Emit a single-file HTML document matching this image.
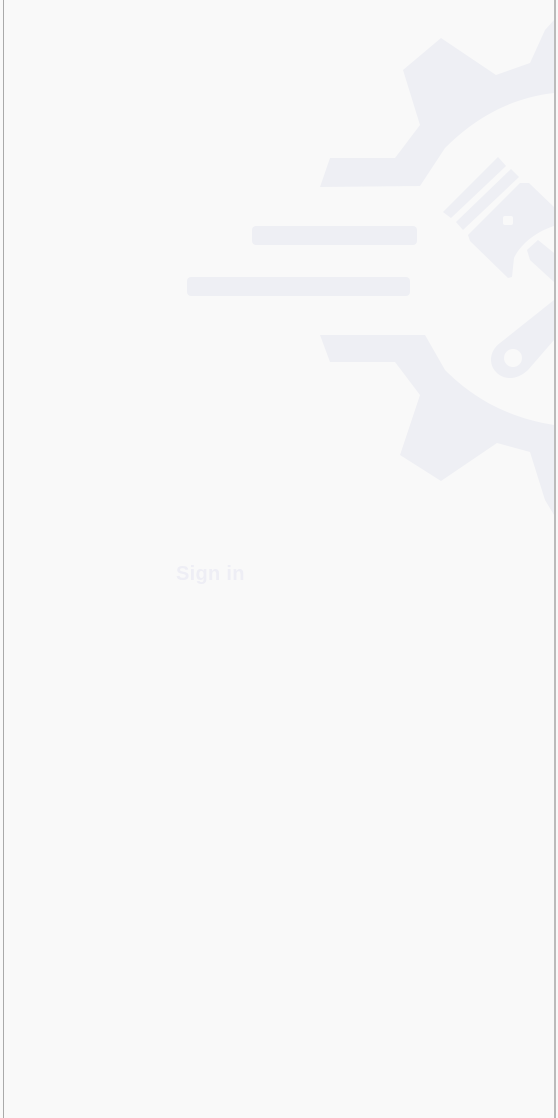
<!DOCTYPE html>
<html><head><style>
html,body{margin:0;padding:0;}
body{width:558px;height:1118px;background:#f9f9f9;position:relative;overflow:hidden;font-family:"Liberation Sans",sans-serif;}
.bl{position:absolute;left:3px;top:0;width:1px;height:1118px;background:#aaa;}
.br{position:absolute;left:554px;top:0;width:2px;height:1118px;background:#bbb;}
.t{position:absolute;left:176px;top:563px;font-size:20px;font-weight:bold;color:#eeeef5;letter-spacing:0.3px;}
</style></head><body>
<svg width="558" height="1118" style="position:absolute;left:0;top:0">
<g fill="#eeeff4">
<path d="M441 38 L496 75 L530 63 L545 30 L554 20 L554 93 C510 98 475 118 445 148 L420 186 L320 187 L330 158 L395 158 L420 125 L403 70 Z"/>
<path d="M320 335 L425 335 L445 370 C475 400 510 418 554 425 L554 515 L545 500 L530 452 L497 443 L441 481 L400 455 L420 395 L395 362 L330 362 Z"/>
<rect x="252" y="226" width="165" height="19" rx="4"/>
<rect x="187" y="277" width="223" height="19" rx="4"/>
<path d="M443 212 L498 157 L506 166 L451 218 Z"/>
<path d="M456 222 L511 169 L519 177 L463 230 Z"/>
<path d="M468 235 L520 183 L529 183 L554 207 L554 226 C535 232 520 245 514 258 L512 277 L508 278 L470 241 Z"/>
<rect x="503" y="216" width="10" height="9" rx="2" fill="#f9f9f9"/>
<path d="M527 250 L538 240 L554 253 L554 282 L530 260 Z"/>
<path d="M554 300 L554 340 L528 370 C515 382 500 380 493 368 C488 358 493 348 500 343 Z"/>
<circle cx="513" cy="358" r="9" fill="#f9f9f9"/>
</g>
</svg>
<div class="bl"></div><div class="br"></div>
<div class="t">Sign in</div>
</body></html>
